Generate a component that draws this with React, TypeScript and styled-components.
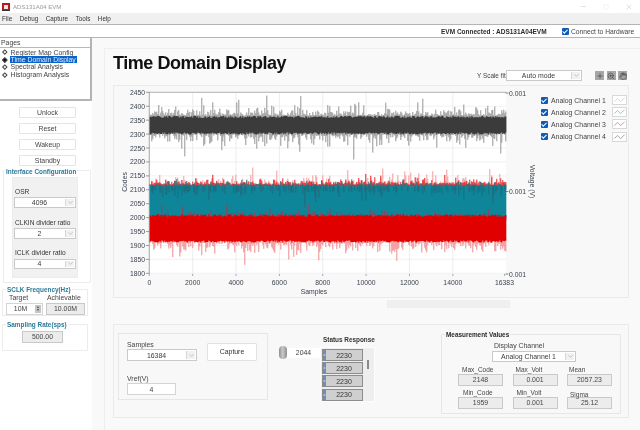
import React, { useMemo } from "react";
import styled, { createGlobalStyle } from "styled-components";
import { ChevronDown, Hand, Minus, Plus, Square, X, ZoomIn } from "lucide-react";

const Global = createGlobalStyle`
  html, body { margin: 0; padding: 0; background: #fff; }
  * { box-sizing: border-box; }
  body { font-family: "Liberation Sans", Arial, sans-serif; font-size: 6.9px; color: #3a3a3a; }
`;

const Page = styled.div`
  width: 640px; height: 430px; overflow: hidden; display: flex; flex-direction: column; background: #fff; filter: blur(0.3px);
`;
const TitleBar = styled.div`
  height: 13px; flex: none; display: flex; align-items: center; padding: 0 7px 0 2px; color: #9a9a9a; font-size: 6.1px; gap: 3px;
`;
const AppIcon = styled.svg`width: 8px; height: 8px; flex: none;`;
const WindowControls = styled.div`
  margin-left: auto; display: flex; gap: 16px; color: #a8a8a8; align-items: center;
`;
const MenuBar = styled.div`
  height: 11px; flex: none; background: #f0f0f0; display: flex; align-items: center; padding-left: 2px; gap: 7.5px; color: #333; font-size: 6.3px;
`;
const Toolbar = styled.div`
  height: 14px; flex: none; background: #fff; border-top: 1px solid #b4b4b4; border-bottom: 1px solid #b4b4b4;
  display: flex; align-items: center; padding-left: 441px;
`;
const Connected = styled.span`font-weight: 700; font-size: 6.5px; color: #2c2c2c; width: 121px; white-space: nowrap;`;
const Check = styled.span`
  width: 7px; height: 7px; flex: none; background: #0c5cb8; border-radius: 1px; display: inline-flex; align-items: center; justify-content: center;
  &::after { content: ""; width: 3.5px; height: 2px; border-left: 0.8px solid #fff; border-bottom: 0.8px solid #fff; transform: rotate(-45deg) translate(0, -0.5px); }
`;
const ConnectLabel = styled.span`margin-left: 2px; font-size: 6.7px; color: #444; white-space: nowrap;`;
const Body = styled.div`flex: 1; display: flex; min-height: 0;`;
const Sidebar = styled.aside`width: 92px; flex: none; display: flex; flex-direction: column; background: #fff;`;
const PagesBox = styled.div`
  height: 63px; border-right: 2px solid #b4b4b4; border-bottom: 2px solid #b4b4b4; flex: none;
`;
const PagesHead = styled.div`height: 10px; border-bottom: 1px solid #b8b8b8; padding-left: 1px; line-height: 9px; color: #444;`;
const PageList = styled.ul`list-style: none; margin: 0; padding: 0.5px 0 0 2px;`;
const PageItem = styled.li<{ $on?: boolean }>`
  height: 7.4px; display: flex; align-items: center; gap: 3px; white-space: nowrap; color: #444;
  & > span:last-child { padding: 0 1px; line-height: 7.4px; background: ${p => (p.$on ? "#0a63c9" : "transparent")}; color: ${p => (p.$on ? "#dfe9f5" : "#444")}; }
`;
const Bullet = styled.span<{ $on?: boolean }>`
  width: 3.6px; height: 3.6px; margin: 0 0.5px; flex: none; transform: rotate(45deg); border: 0.7px solid #444; background: ${p => (p.$on ? "#111" : "#fff")};
`;
const SideButtons = styled.div`display: flex; flex-direction: column; gap: 5px; padding: 6px 0 0 19px;`;
const SideButton = styled.div`
  width: 57px; height: 11px; background: #fff; border: 1px solid #e4e4e4; border-radius: 1px; text-align: center; line-height: 9px; color: #444;
`;
const Group = styled.section<{ $w: number; $h: number; $mt: number; $ml?: number }>`
  width: ${p => p.$w}px; height: ${p => p.$h}px; margin-top: ${p => p.$mt}px; margin-left: ${p => p.$ml ?? 2}px; flex: none;
  border: 1px solid #ececec; display: flex; flex-direction: column;
`;
const GroupTitle = styled.div<{ $ml?: number; $up?: number }>`
  margin: ${p => -(p.$up ?? 5)}px 0 0 ${p => p.$ml ?? 1}px; height: 9px; line-height: 9px; padding: 0 1px; width: fit-content; background: #fff;
  font-weight: 700; font-size: 6.4px; white-space: nowrap; color: #2a7a99; flex: none;
`;
const ConfigInner = styled.div`
  margin: 1px 0 0 8px; width: 66px; height: 101px; background: #f1f1f1; border: 1px solid #ececec; padding: 9px 1px 0 1px; display: flex; flex-direction: column;
`;
const ConfigLabel = styled.div<{ $mt?: number }>`
  height: 9px; line-height: 9px; font-size: 6.6px; white-space: nowrap; color: #333; margin-top: ${p => p.$mt ?? 0}px; padding-left: 1px;
`;
const SelectBox = styled.div<{ $w: number; $h?: number; $mt?: number }>`
  width: ${p => p.$w}px; height: ${p => p.$h ?? 11}px; margin-top: ${p => p.$mt ?? 0}px; flex: none; background: #fff; border: 1px solid #c9c9c9; display: flex; align-items: stretch; color: #3a3a3a;
`;
const SelectText = styled.div`flex: 1; text-align: center; align-self: center; line-height: 9px; white-space: nowrap;`;
const Chevron = styled.div`
  width: 9px; flex: none; background: #f1f1f1; border-left: 1px solid #d6d6d6; margin: 1px; display: flex; align-items: center; justify-content: center; color: #8a8a8a;
`;
const SclkHeads = styled.div`display: grid; grid-template-columns: 38px auto; padding-left: 6px; height: 9px; line-height: 8px; color: #444; flex: none;`;
const SclkRow = styled.div`display: flex; gap: 3px; padding-left: 3px;`;
const InputBox = styled.div<{ $w: number; $gray?: boolean; $h?: number }>`
  width: ${p => p.$w}px; height: ${p => p.$h ?? 11.5}px; flex: none; border: 1px solid ${p => (p.$gray ? "#c8c8c8" : "#d4d4d4")}; background: ${p => (p.$gray ? "#ececec" : "#fff")};
  display: flex; align-items: center; justify-content: center; color: #444;
`;
const InputLabel = styled.span`flex: 1; text-align: center;`;
const Spinner = styled.span`
  width: 6px; align-self: stretch; margin: 1px; background: #c4c4c4; display: flex; flex-direction: column; align-items: center; justify-content: center; gap: 1px;
`;
const SpinArrow = styled.span<{ $down?: boolean }>`
  width: 0; height: 0; border-left: 1.5px solid transparent; border-right: 1.5px solid transparent;
  ${p => (p.$down ? "border-top: 2px solid #444;" : "border-bottom: 2px solid #444;")}
`;
const RateRow = styled.div`display: flex; padding: 2px 0 0 19px;`;

const Main = styled.main`flex: 1; background: #f9f9f9; padding: 10px 0 0 12px; display: flex; min-width: 0;`;
const Content = styled.div`
  flex: 1; border-left: 1px solid #eee; border-top: 1px solid #eee; padding: 0 11px 0 8px; display: flex; flex-direction: column; min-width: 0; background: #f9f9f9;
`;
const Title = styled.h1`
  margin: 3px 0 0 0; height: 22px; line-height: 22px; font-size: 18px; font-weight: 700; color: #111; letter-spacing: -0.025em; white-space: nowrap;
`;
const ScaleRow = styled.div`display: flex; align-items: center; height: 11px; padding-left: 364px; margin-top: -4px; flex: none;`;
const ScaleLabel = styled.span`width: 29px; font-size: 6.4px; white-space: nowrap; color: #444;`;
const PaletteGroup = styled.div`display: flex; gap: 2.5px; margin-left: 13px; height: 9px;`;
const PaletteBtn = styled.span`width: 9px; height: 9px; background: #a6a6a6; color: #222; display: flex; align-items: center; justify-content: center;`;
const ChartPanel = styled.div`
  margin-top: 4px; width: 516px; height: 213px; flex: none; border: 1px solid #eaeaea; background: #f8f8f8; display: flex;
`;
const ChartSvg = styled.svg`width: 424px; height: 211px; display: block; flex: none;`;
const Legend = styled.div`display: flex; flex-direction: column; padding: 9px 0 0 3px; gap: 2.2px;`;
const LegendRow = styled.div`display: flex; align-items: center; height: 10px; color: #444; white-space: nowrap;`;
const LegendText = styled.span`margin-left: 3px; width: 61px;`;
const Swatch = styled.svg`width: 15px; height: 10px; background: #fff; border: 1px solid #d8d8d8; flex: none;`;
const ScrollWrap = styled.div`height: 8px; margin-top: 2px; padding-left: 274px; flex: none;`;
const ScrollTrack = styled.div`width: 123px; height: 8px; background: #efefef;`;
const BottomPanel = styled.div`
  margin-top: 16px; width: 516px; height: 94px; flex: none; border: 1px solid #eaeaea; background: #f8f8f8; display: flex; align-items: flex-start;
`;
const CaptureGroup = styled.div`
  margin: 8px 0 0 4px; width: 150px; height: 67px; flex: none; border: 1px solid #e6e6e6; padding: 6px 0 0 8px; display: grid; grid-template-columns: 80px 50px; grid-template-rows: 21px auto;
`;
const FieldStack = styled.div`display: flex; flex-direction: column;`;
const FieldLabel = styled.div`height: 9px; line-height: 9px; color: #444; flex: none;`;
const CaptureBtn = styled.div`
  width: 50px; height: 18px; margin-top: 3px; background: #fff; border: 1px solid #e2e2e2; border-radius: 1px; text-align: center; line-height: 16px; color: #333;
`;
const VrefWrap = styled.div`grid-column: 1 / 3; margin-top: 13px; display: flex; flex-direction: column;`;
const SliderBlock = styled.div`margin: 21px 0 0 11px; display: flex; align-items: center; width: 41px; flex: none;`;
const Knob = styled.span`
  width: 8px; height: 13px; border-radius: 4px; background: linear-gradient(90deg, #8e8e8e, #c9c9c9 45%, #8e8e8e); flex: none;
`;
const SliderValue = styled.div`width: 33px; height: 10px; background: #fff; text-align: center; font-size: 6.9px; line-height: 9px; color: #444;`;
const StatusBlock = styled.div`margin: 10px 0 0 0; width: 55px; flex: none; display: flex; flex-direction: column;`;
const StatusTitle = styled.div`height: 9px; line-height: 9px; font-weight: 700; font-size: 6.4px; color: #333; white-space: nowrap; padding-left: 3px;`;
const StatusList = styled.div`
  margin-top: 3px; height: 55px; background: #eeeeee; border: 1px solid #fdfdfd; padding: 1px 0 0 1px; display: flex; gap: 4px;
`;
const StatusRows = styled.div`display: flex; flex-direction: column; gap: 1.2px; width: 41px;`;
const StatusRow = styled.div`
  height: 12px; background: #cfcfcf; border: 1.5px solid #8c8c8c; display: flex; align-items: center; font-size: 7px; color: #333;
`;
const XTag = styled.span`width: 3px; align-self: stretch; background: #6f8db8; color: #e6eaf2; font-size: 4px; line-height: 9px; overflow: hidden; text-align: center; flex: none;`;
const StatusValue = styled.span`flex: 1; text-align: center; line-height: 9px;`;
const ScrollThumb = styled.span`margin-top: 11px; width: 2px; height: 9px; background: #8a8a8a; flex: none;`;
const MeasureGroup = styled.div`
  margin: 9px 0 0 66px; width: 180px; height: 80px; flex: none; border: 1px solid #e6e6e6; display: flex; flex-direction: column; align-items: stretch;
`;
const MeasureTitle = styled(GroupTitle)`background: #f8f8f8; color: #2a2a2a;`;
const DisplayLabel = styled.div`height: 9px; line-height: 9px; margin-top: 2px; padding-left: 52px; color: #444;`;
const SelectCenter = styled.div`display: flex; margin-top: 1px; padding-left: 50px;`;
const MeasureGrid = styled.div`
  display: grid; grid-template-columns: 45px 45px 45px; column-gap: 9.5px; grid-template-rows: 9px 12px 11px 12px; margin: 3px 0 0 16px;
`;
const MeasureLabel = styled.div<{ $x: number; $low?: boolean }>`
  font-size: 6.5px; line-height: 9px; color: #444; align-self: end; padding-left: ${p => p.$x}px; transform: translateY(${p => (p.$low ? 1.5 : 0)}px); white-space: nowrap;
`;
const ValueBox = styled.div`
  width: 45px; height: 12px; background: #ececec; border: 1px solid #c9c9c9; text-align: center; line-height: 10px; color: #444;
`;

function rng(seed: number) {
  let s = seed;
  return () => {
    s = (s * 1664525 + 1013904223) % 4294967296;
    return s / 4294967296;
  };
}
const py = (v: number) => 92.3 + (2450 - v) * 0.2785;
const PL = 149.3;
const PR = 506;

type Trace = { d: string; c: string; w: number };

function traces(): Trace[] {
  const r = rng(20240);
  const ex = (k: number) => -Math.log(1 - r() * 0.999) * k;
  const p: Record<string, string> = { gs: "", gc: "", rp: "", rt: "", rs: "", rc: "", rm: "", ts: "", tc: "", td: "" };
  for (let x = PL + 0.5; x < PR; x += 1) {
    const seg = (k: string, a: number, b: number, X = x) => {
      p[k] += `M${X.toFixed(2)} ${py(a).toFixed(1)}V${py(b).toFixed(1)}`;
    };
    seg("gs", 2366 + ex(11), 2303 - ex(14));
    seg("gc", 2358 + r() * 8, 2306 - r() * 8);
    if (r() < 0.5) seg("rp", 2112, 2122 + ex(14));
    seg("rt", 2112, 2118 + ex(8));
    seg("ts", 2100, 2115 + ex(5));
    seg("tc", 2110 + r() * 6, 1990);
    if (r() < 0.4) seg("td", 2112 + r() * 4, 2098 - ex(9));
    if (r() < 0.45) seg("rm", 2000, 2008 + ex(7));
    seg("rs", 1925, 1915 - ex(15));
    seg("rc", 2003 + r() * 9, 1918 - r() * 8);
  }
  return [
    { d: p.gs, c: "#959595", w: 1 },
    { d: p.gc, c: "#3b3b3b", w: 1.02 },
    { d: p.rp, c: "#f29a9a", w: 1 },
    { d: p.rt, c: "#ee1c1c", w: 1 },
    { d: p.ts, c: "#2a6f80", w: 1 },
    { d: p.tc, c: "#0e8598", w: 1.02 },
    { d: p.td, c: "#1f6a7e", w: 1 },
    { d: p.rm, c: "#a83a4c", w: 1 },
    { d: p.rs, c: "#f08a8d", w: 1 },
    { d: p.rc, c: "#e00000", w: 1.02 },
  ];
}

const yTicks = [2450, 2400, 2350, 2300, 2250, 2200, 2150, 2100, 2050, 2000, 1950, 1900, 1850, 1800];
const xTicks = [0, 2000, 4000, 6000, 8000, 10000, 12000, 14000];
const px = (v: number) => PL + v * 0.02168;
const axisFont = "'Liberation Sans', sans-serif";

function Chart() {
  const data = useMemo(traces, []);
  return (
    <ChartSvg viewBox="114 86 424 211">
      <rect x={PL} y={92} width={PR - PL} height={181.5} fill="#fff" />
      {yTicks.map(v => <line key={v} x1={PL} x2={PR} y1={py(v)} y2={py(v)} stroke="#ededed" strokeWidth={0.8} />)}
      {xTicks.map(v => <line key={v} x1={px(v)} x2={px(v)} y1={92} y2={273.5} stroke="#e8e8e8" strokeWidth={0.8} />)}
      {data.map((t, i) => <path key={i} d={t.d} stroke={t.c} strokeWidth={t.w} fill="none" />)}
      <line x1={PL} x2={PR} y1={92.3} y2={92.3} stroke="#9a9a9a" strokeWidth={0.7} />
      <line x1={PL} x2={PL} y1={92} y2={274} stroke="#9a9a9a" strokeWidth={0.8} />
      {yTicks.map(v => (
        <g key={v}>
          <line x1={146} x2={PL} y1={py(v)} y2={py(v)} stroke="#777" strokeWidth={0.7} />
          <text x={145} y={py(v) + 2.5} textAnchor="end" fontSize={6.8} fill="#3c4250" fontFamily={axisFont}>{v}</text>
        </g>
      ))}
      {[...xTicks, 16383].map(v => (
        <g key={v}>
          <line x1={px(v)} x2={px(v)} y1={274} y2={276} stroke="#888" strokeWidth={0.7} />
          <text x={px(v)} y={284.5} textAnchor="middle" fontSize={6.8} fill="#3c4250" fontFamily={axisFont}>{v}</text>
        </g>
      ))}
      <text x={0} y={0} transform="translate(126.5 182) rotate(-90)" textAnchor="middle" fontSize={6.8} fill="#3c4250" fontFamily={axisFont}>Codes</text>
      <text x={314} y={293.5} textAnchor="middle" fontSize={6.8} fill="#3c4250" fontFamily={axisFont}>Samples</text>
      {[93, 191.5, 274].map(y => (
        <g key={y}>
          <line x1={505.5} x2={508.5} y1={y} y2={y} stroke="#555" strokeWidth={0.7} />
          <text x={509} y={y + 2.5} fontSize={6.8} fill="#3c4250" fontFamily={axisFont}>0.001</text>
        </g>
      ))}
      <text x={0} y={0} transform="translate(529.5 181.5) rotate(90)" textAnchor="middle" fontSize={6.8} fill="#3c4250" fontFamily={axisFont}>Voltage (V)</text>
    </ChartSvg>
  );
}

function Select({ w, h, mt, text }: { w: number; h?: number; mt?: number; text: string }) {
  return (
    <SelectBox $w={w} $h={h} $mt={mt}>
      <SelectText>{text}</SelectText>
      <Chevron><ChevronDown size={7} strokeWidth={1.5} /></Chevron>
    </SelectBox>
  );
}

const channels = [
  ["Analog Channel 1", "#9adbe0"],
  ["Analog Channel 2", "#6fb0bf"],
  ["Analog Channel 3", "#ec5f5f"],
  ["Analog Channel 4", "#808080"],
];

export default function App() {
  return (
    <Page>
      <Global />
      <TitleBar>
        <AppIcon viewBox="0 0 8 8">
          <rect width="8" height="8" fill="#b51b1b" />
          <rect x="2" y="2" width="4" height="4" fill="#f4e4e4" />
          <rect y="7" width="8" height="1" fill="#333" />
        </AppIcon>
        <span>ADS131A04 EVM</span>
        <WindowControls>
          <Minus size={7} strokeWidth={1.2} />
          <Square size={6} strokeWidth={0.8} color="#d0d0d0" />
          <X size={8} strokeWidth={1} />
        </WindowControls>
      </TitleBar>
      <MenuBar>
        <span>File</span><span>Debug</span><span>Capture</span><span>Tools</span><span>Help</span>
      </MenuBar>
      <Toolbar>
        <Connected>EVM Connected : ADS131A04EVM</Connected>
        <Check />
        <ConnectLabel>Connect to Hardware</ConnectLabel>
      </Toolbar>
      <Body>
        <Sidebar>
          <PagesBox>
            <PagesHead>Pages</PagesHead>
            <PageList>
              <PageItem><Bullet /><span>Register Map Config</span></PageItem>
              <PageItem $on><Bullet $on /><span>Time Domain Display</span></PageItem>
              <PageItem><Bullet /><span>Spectral Analysis</span></PageItem>
              <PageItem><Bullet /><span>Histogram Analysis</span></PageItem>
            </PageList>
          </PagesBox>
          <SideButtons>
            <SideButton>Unlock</SideButton>
            <SideButton>Reset</SideButton>
            <SideButton>Wakeup</SideButton>
            <SideButton>Standby</SideButton>
          </SideButtons>
          <Group $w={88} $h={113} $mt={4} $ml={3}>
            <GroupTitle $up={4}>Interface Configuration</GroupTitle>
            <ConfigInner>
              <ConfigLabel>OSR</ConfigLabel>
              <Select w={62} mt={1} h={10.5} text="4096" />
              <ConfigLabel $mt={10}>CLKIN divider ratio</ConfigLabel>
              <Select w={62} mt={1.5} h={10.5} text="2" />
              <ConfigLabel $mt={9.5}>ICLK divider ratio</ConfigLabel>
              <Select w={62} mt={1.5} h={10.5} text="4" />
            </ConfigInner>
          </Group>
          <Group $w={86} $h={27} $mt={6}>
            <GroupTitle $ml={3}>SCLK Frequency(Hz)</GroupTitle>
            <SclkHeads><span>Target</span><span>Achievable</span></SclkHeads>
            <SclkRow>
              <InputBox $w={37}><InputLabel>10M</InputLabel><Spinner><SpinArrow /><SpinArrow $down /></Spinner></InputBox>
              <InputBox $w={39} $gray>10.00M</InputBox>
            </SclkRow>
          </Group>
          <Group $w={86} $h={27} $mt={8}>
            <GroupTitle $ml={3}>Sampling Rate(sps)</GroupTitle>
            <RateRow><InputBox $w={41} $gray>500.00</InputBox></RateRow>
          </Group>
        </Sidebar>
        <Main>
          <Content>
            <Title>Time Domain Display</Title>
            <ScaleRow>
              <ScaleLabel>Y Scale fit</ScaleLabel>
              <Select w={76} text="Auto mode" />
              <PaletteGroup>
                <PaletteBtn><Plus size={8} strokeWidth={1.4} /></PaletteBtn>
                <PaletteBtn><ZoomIn size={8} strokeWidth={1.4} /></PaletteBtn>
                <PaletteBtn><Hand size={8} strokeWidth={1.4} /></PaletteBtn>
              </PaletteGroup>
            </ScaleRow>
            <ChartPanel>
              <Chart />
              <Legend>
                {channels.map(([name, color]) => (
                  <LegendRow key={name}>
                    <Check />
                    <LegendText>{name}</LegendText>
                    <Swatch viewBox="0 0 15 10"><polyline points="1,7 5,3 9,7 14,2" fill="none" stroke={color} strokeWidth={0.9} /></Swatch>
                  </LegendRow>
                ))}
              </Legend>
            </ChartPanel>
            <ScrollWrap><ScrollTrack /></ScrollWrap>
            <BottomPanel>
              <CaptureGroup>
                <FieldStack>
                  <FieldLabel>Samples</FieldLabel>
                  <Select w={70} h={12} text="16384" />
                </FieldStack>
                <CaptureBtn>Capture</CaptureBtn>
                <VrefWrap>
                  <FieldLabel>Vref(V)</FieldLabel>
                  <InputBox $w={49} $h={12}>4</InputBox>
                </VrefWrap>
              </CaptureGroup>
              <SliderBlock>
                <Knob />
                <SliderValue>2044</SliderValue>
              </SliderBlock>
              <StatusBlock>
                <StatusTitle>Status Response</StatusTitle>
                <StatusList>
                  <StatusRows>
                    {[0, 1, 2, 3].map(i => (
                      <StatusRow key={i}><XTag>x</XTag><StatusValue>2230</StatusValue></StatusRow>
                    ))}
                  </StatusRows>
                  <ScrollThumb />
                </StatusList>
              </StatusBlock>
              <MeasureGroup>
                <MeasureTitle $ml={3}>Measurement Values</MeasureTitle>
                <DisplayLabel>Display Channel</DisplayLabel>
                <SelectCenter><Select w={84} text="Analog Channel 1" /></SelectCenter>
                <MeasureGrid>
                  <MeasureLabel $x={4}>Max_Code</MeasureLabel>
                  <MeasureLabel $x={3}>Max_Volt</MeasureLabel>
                  <MeasureLabel $x={2}>Mean</MeasureLabel>
                  <ValueBox>2148</ValueBox>
                  <ValueBox>0.001</ValueBox>
                  <ValueBox>2057.23</ValueBox>
                  <MeasureLabel $x={5}>Min_Code</MeasureLabel>
                  <MeasureLabel $x={4}>Min_Volt</MeasureLabel>
                  <MeasureLabel $x={3} $low>Sigma</MeasureLabel>
                  <ValueBox>1959</ValueBox>
                  <ValueBox>0.001</ValueBox>
                  <ValueBox>25.12</ValueBox>
                </MeasureGrid>
              </MeasureGroup>
            </BottomPanel>
          </Content>
        </Main>
      </Body>
    </Page>
  );
}
